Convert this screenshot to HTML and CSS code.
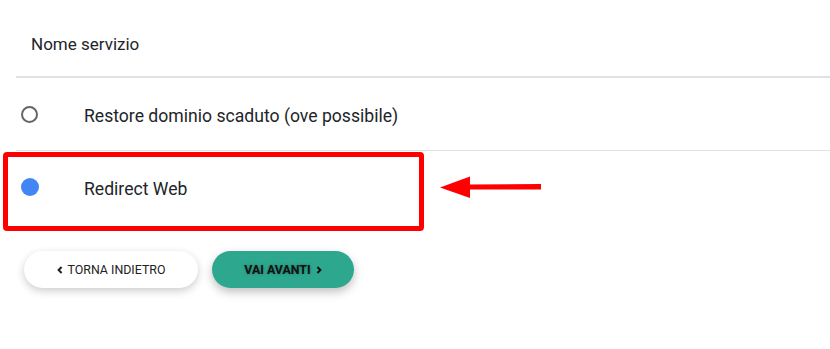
FILE: index.html
```html
<!DOCTYPE html>
<html lang="it">
<head>
<meta charset="utf-8">
<title>Servizi</title>
<link rel="stylesheet" href="styles.css">
</head>
<body>
<div class="page">
  <div class="services">
    <div class="head">Nome servizio</div>
    <div class="row">
      <span class="radio-cell"><span class="radio"></span></span>
      <span class="label">Restore dominio scaduto (ove possibile)</span>
    </div>
    <div class="row last">
      <span class="radio-cell"><span class="radio checked"></span></span>
      <span class="label">Redirect Web</span>
    </div>
    <div class="highlight"></div>
    <svg class="arrow" width="102" height="23" viewBox="0 0 102 23">
      <polygon points="0,11.5 30,0.5 30,8.5 101,8 101,13.5 30,13.5 30,22" fill="#ff0000"/>
    </svg>
  </div>
  <div class="actions">
    <button class="btn btn-back" type="button">
      <svg class="chev" width="6" height="8" viewBox="0 0 6 8"><path d="M4.6 1 L1.6 4 L4.6 7" fill="none" stroke="#222" stroke-width="2"/></svg>
      TORNA INDIETRO
    </button>
    <button class="btn btn-next" type="button">
      VAI AVANTI
      <svg class="chev" width="6" height="8" viewBox="0 0 6 8"><path d="M1.4 1 L4.4 4 L1.4 7" fill="none" stroke="#111" stroke-width="2"/></svg>
    </button>
  </div>
</div>
</body>
</html>
```

FILE: styles.css
```css
* { box-sizing: border-box; }
html, body { margin: 0; padding: 0; background: #fff; }
body {
  font-family: Roboto, "Liberation Sans", sans-serif;
  color: #212529;
  width: 830px;
  height: 349px;
  overflow: hidden;
}
.page { padding: 0; }
.services {
  position: relative;
  margin-left: 16px;
}
.head {
  height: 78px;
  padding: 32px 0 0 15px;
  font-size: 17px;
  line-height: 24px;
  border-bottom: 2px solid #dee2e6;
}
.row {
  display: flex;
  align-items: center;
  height: 73px;
  border-bottom: 1px solid #dee2e6;
  font-size: 17.6px;
  line-height: 24px;
}
.row .label { padding-top: 3px; }
.row.last { border-bottom: none; height: 72px; }
.radio-cell {
  width: 68px;
  padding-left: 5px;
  display: flex;
  align-items: center;
}
.radio {
  display: block;
  width: 17px;
  height: 17px;
  border: 2px solid #666;
  border-radius: 50%;
}
.radio.checked {
  width: 18px;
  height: 18px;
  border: none;
  background: #4285f4;
}
.label { color: #212529; }
.highlight {
  position: absolute;
  left: -13px;
  top: 152px;
  width: 421px;
  height: 79px;
  border: 5px solid #ff0000;
  border-radius: 4px;
}
.arrow {
  position: absolute;
  left: 424px;
  top: 176px;
}
.actions {
  display: flex;
  gap: 14px;
  margin-top: 28px;
  padding-left: 24px;
}
.btn {
  height: 37px;
  border: none;
  border-radius: 19px;
  padding: 0;
  font-family: Roboto, "Liberation Sans", sans-serif;
  font-size: 12.4px;
  text-transform: uppercase;
  display: flex;
  align-items: center;
  gap: 5px;
  cursor: pointer;
  box-shadow: 0 3px 8px rgba(0, 0, 0, 0.2);
}
.btn-back {
  background: #fff;
  color: #222;
  width: 174px;
  justify-content: center;
}
.btn-next {
  background: #2da88f;
  color: #111;
  font-weight: 700;
  width: 142px;
  justify-content: center;
  text-shadow: 0 0 3px rgba(0, 0, 0, 0.35);
  box-shadow: 0 4px 10px rgba(0, 0, 0, 0.25);
}
.chev { display: block; }
```
